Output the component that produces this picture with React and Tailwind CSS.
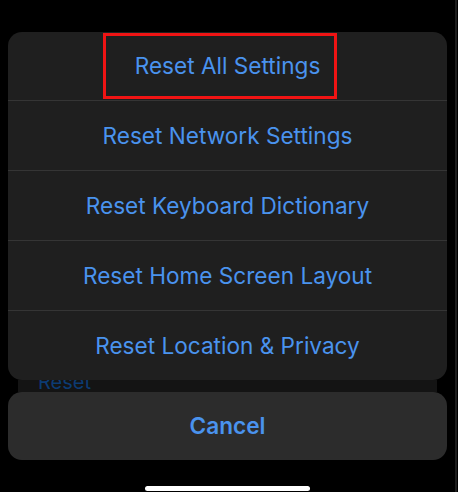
import React from "react";

const font = { fontFamily: "Inter, 'Noto Sans', 'Liberation Sans', sans-serif" };

function Row({ children, first }) {
  return (
    <div
      className={`flex items-center justify-center text-[22.6px] text-[#4a93ee] ${
        first ? "h-[68px]" : "h-[70px] border-t border-[#353535]"
      }`}
    >
      {children}
    </div>
  );
}

export default function App() {
  return (
    <div className="relative flex h-[492px] w-[458px] bg-black" style={font}>
      <div className="flex w-[455px] flex-col">
        <div className="h-[32px]" />
        <div className="mx-[8px] overflow-hidden rounded-[14px] bg-[#1f1f1f]">
          <Row first>Reset All Settings</Row>
          <Row>Reset Network Settings</Row>
          <Row>Reset Keyboard Dictionary</Row>
          <Row>Reset Home Screen Layout</Row>
          <Row>Reset Location &amp; Privacy</Row>
        </div>
        <div className="mx-[18px] h-[12px] overflow-hidden bg-[#141414]">
          <div className="-mt-[8px] pl-[20px] text-[20px] leading-[20px] text-[#0c3b73]">Reset</div>
        </div>
        <div className="mx-[8px] flex h-[68px] items-center justify-center rounded-[14px] bg-[#2c2c2c] text-[22.6px] font-semibold text-[#4a93ee]">
          Cancel
        </div>
        <div className="flex-1" />
        <div className="mb-[1px] ml-[145px] h-[5px] w-[165px] rounded-full bg-white" />
      </div>
      <div className="w-[2px] bg-[#1e1e1e]" />
      <div className="flex-1" />
      <div className="absolute left-[103px] top-[33px] h-[66px] w-[234px] border-[3px] border-[#f01414]" />
    </div>
  );
}
